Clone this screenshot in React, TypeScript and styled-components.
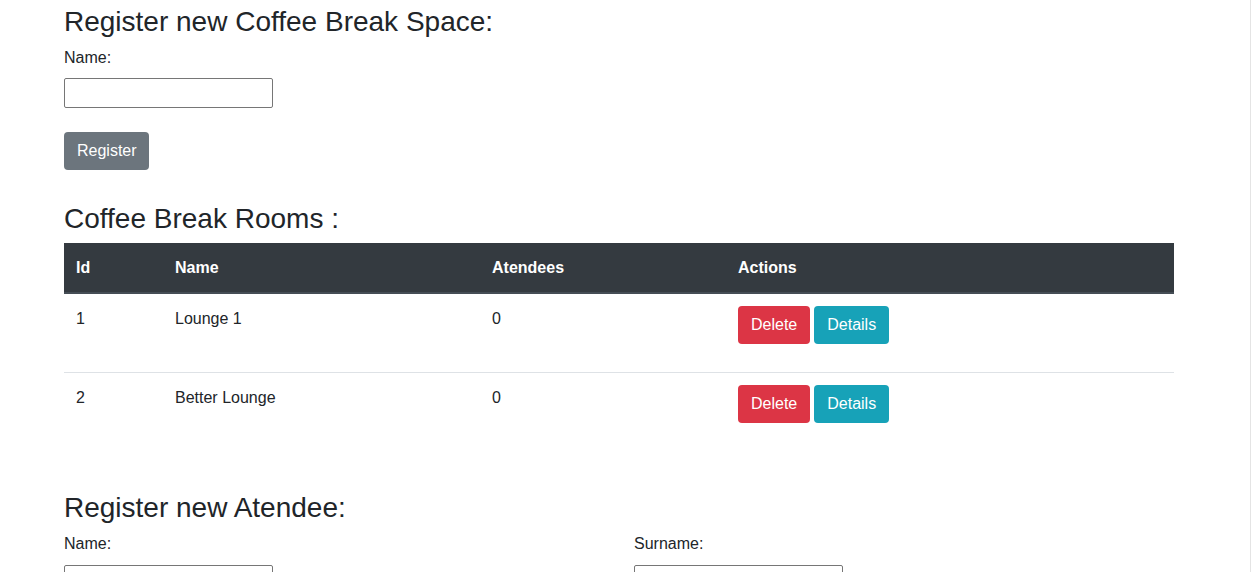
import React from 'react';
import styled, { createGlobalStyle } from 'styled-components';

const GlobalStyle = createGlobalStyle`
  html, body {
    margin: 0;
    padding: 0;
    background: #ffffff;
  }
  body {
    font-family: "Liberation Sans", Arial, sans-serif;
    font-size: 16px;
    line-height: 1.5;
    color: #212529;
  }
  * {
    box-sizing: border-box;
  }
`;

const Page = styled.div`
  width: 1251px;
  height: 572px;
  overflow: hidden;
  border-right: 1px solid #e4e4e4;
`;

const Container = styled.div`
  width: 1110px;
  margin-left: 64px;
  padding-top: 5px;
`;

const Heading = styled.h3<{ $top?: number; $bottom?: number }>`
  margin: ${props => props.$top || 0}px 0 ${props => props.$bottom || 0}px;
  font-size: 28px;
  font-weight: 400;
  line-height: 34px;
`;

const Label = styled.label`
  display: block;
  font-size: 16px;
  line-height: 24px;
`;

const TextInput = styled.input`
  display: block;
  width: 209px;
  height: 30px;
  margin-top: 8px;
  padding: 2px 4px;
  border: 1px solid #767676;
  border-radius: 2px;
  font-family: inherit;
  font-size: 16px;
  background: #fff;
`;

const Button = styled.button<{ $variant: 'secondary' | 'danger' | 'info' }>`
  display: inline-block;
  height: 38px;
  padding: 6px 12px;
  border: 1px solid transparent;
  border-radius: 4px;
  font-family: inherit;
  font-size: 16px;
  line-height: 24px;
  color: #fff;
  vertical-align: top;
  cursor: pointer;
  background-color: ${props =>
    props.$variant === 'danger'
      ? '#dc3545'
      : props.$variant === 'info'
      ? '#17a2b8'
      : '#6c757d'};
`;

const RegisterButton = styled(Button)`
  margin-top: 24px;
  padding: 6px 11px 6px 12px;
`;

const Table = styled.table`
  width: 100%;
  margin-top: 7px;
  border-collapse: collapse;
  table-layout: fixed;
`;

const HeadCell = styled.th`
  padding: 13px 12px 12px;
  text-align: left;
  font-weight: 700;
  line-height: 24px;
  color: #fff;
  background: #343a40;
  border-bottom: 2px solid #454d55;
`;

const Row = styled.tr<{ $first?: boolean }>`
  border-top: ${props => (props.$first ? 'none' : '1px solid #dee2e6')};
`;

const Cell = styled.td`
  padding: 13px 12px 27px;
  vertical-align: top;
  line-height: 24px;
`;

const Actions = styled.div`
  display: flex;
  gap: 4px;
  height: 38px;
  margin-top: -1px;
  margin-bottom: 1px;
`;

const FormRow = styled.div`
  display: grid;
  grid-template-columns: 570px 540px;
  margin-top: 7px;
`;

const Field = styled.div`
  display: flex;
  flex-direction: column;
`;

const FieldInput = styled(TextInput)`
  margin-top: 9px;
`;

const rooms = [
  { id: 1, name: 'Lounge 1', atendees: 0 },
  { id: 2, name: 'Better Lounge', atendees: 0 },
];

const App = () => {
  return (
    <Page>
      <GlobalStyle />
      <Container>
        <Heading $bottom={7}>Register new Coffee Break Space:</Heading>
        <Label>Name:</Label>
        <TextInput type="text" />
        <RegisterButton $variant="secondary">Register</RegisterButton>

        <Heading $top={32}>Coffee Break Rooms :</Heading>
        <Table>
          <colgroup>
            <col style={{ width: 99 }} />
            <col style={{ width: 317 }} />
            <col style={{ width: 246 }} />
            <col />
          </colgroup>
          <thead>
            <tr>
              <HeadCell>Id</HeadCell>
              <HeadCell>Name</HeadCell>
              <HeadCell>Atendees</HeadCell>
              <HeadCell>Actions</HeadCell>
            </tr>
          </thead>
          <tbody>
            {rooms.map((room, i) => (
              <Row key={room.id} $first={i === 0}>
                <Cell>{room.id}</Cell>
                <Cell>{room.name}</Cell>
                <Cell>{room.atendees}</Cell>
                <Cell>
                  <Actions>
                    <Button $variant="danger">Delete</Button>
                    <Button $variant="info">Details</Button>
                  </Actions>
                </Cell>
              </Row>
            ))}
          </tbody>
        </Table>

        <Heading $top={40}>Register new Atendee:</Heading>
        <FormRow>
          <Field>
            <Label>Name:</Label>
            <FieldInput type="text" />
          </Field>
          <Field>
            <Label>Surname:</Label>
            <FieldInput type="text" />
          </Field>
        </FormRow>
      </Container>
    </Page>
  );
};

export default App;
